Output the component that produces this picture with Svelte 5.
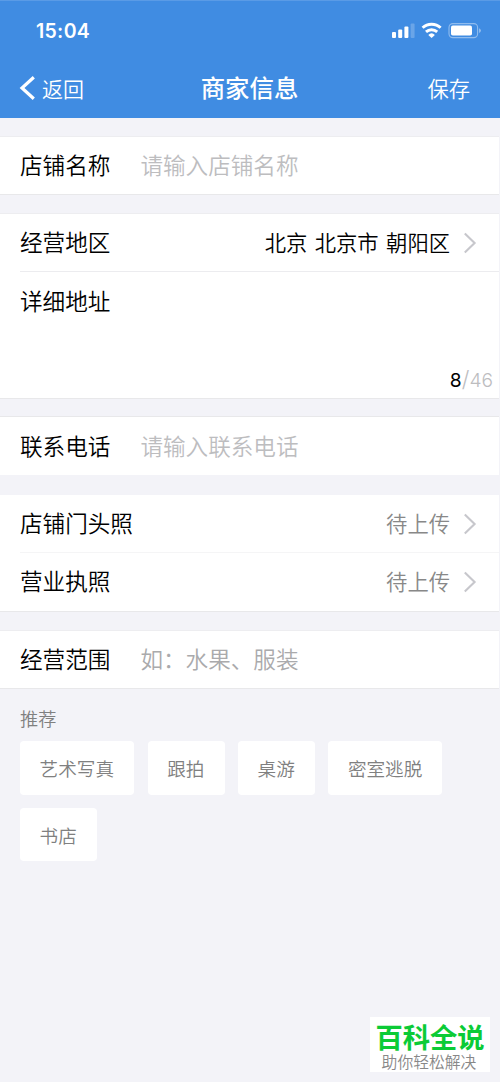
<script>
  const tags = ['艺术写真', '跟拍', '桌游', '密室逃脱', '书店'];
</script>

{#snippet chevron()}
  <svg class="chevron" viewBox="0 0 14 22" width="14" height="22"><path d="M1.8 1.6 11.6 11 1.8 20.4" fill="none" stroke="#c7c7cc" stroke-width="2.1" /></svg>
{/snippet}

<div class="screen">
  <header>
    <div class="status">
      <span class="time">15:04</span>
      <svg class="indicators" width="92" height="18" viewBox="0 0 92 18" fill="#fff">
        <rect x="2" y="10" width="4" height="6" rx="1" />
        <rect x="8.2" y="7.5" width="4" height="8.5" rx="1" />
        <rect x="14.4" y="4.5" width="4" height="11.5" rx="1" />
        <rect x="20.6" y="1.5" width="4" height="14.5" rx="1" opacity=".22" />
        <g fill="none" stroke="#fff" stroke-width="2.9">
          <path d="M32.6 5.8a13 13 0 0 1 18 0" />
          <path d="M36 9.9a8.2 8.2 0 0 1 11.2 0" />
        </g>
        <path d="M38.3 12.9a4.8 4.8 0 0 1 6.6 0L41.6 16z" />
        <rect x="59" y="1.6" width="28.6" height="14" rx="3.8" fill="none" stroke="#fff" stroke-width="1.1" opacity=".42" />
        <rect x="61" y="3.6" width="21" height="10" rx="1.8" />
        <path d="M89.2 6.2a2.6 2.6 0 0 1 0 4.8z" opacity=".5" />
      </svg>
    </div>
    <nav>
      <div class="back">
        <svg width="16" height="24" viewBox="0 0 16 24"><path d="M14.8 1.2 3 12l11.8 10.8" fill="none" stroke="#fff" stroke-width="3.2" /></svg>
        <span>返回</span>
      </div>
      <h1>商家信息</h1>
      <span class="save">保存</span>
    </nav>
  </header>

  <section class="first">
    <div class="row"><span class="label">店铺名称</span><span class="hint">请输入店铺名称</span></div>
  </section>

  <section class="region">
    <div class="row"><span class="label">经营地区</span><span class="value">北京 北京市 朝阳区</span>{@render chevron()}</div>
    <div class="address">
      <span class="label">详细地址</span>
      <span class="count"><b>8</b><i>/</i>46</span>
    </div>
  </section>

  <section class="phone">
    <div class="row"><span class="label">联系电话</span><span class="hint">请输入联系电话</span></div>
  </section>

  <section class="photos">
    <div class="row"><span class="label">店铺门头照</span><span class="value muted">待上传</span>{@render chevron()}</div>
    <div class="row second"><span class="label">营业执照</span><span class="value muted">待上传</span>{@render chevron()}</div>
  </section>

  <section class="scope">
    <div class="row"><span class="label">经营范围</span><span class="hint darker">如：水果、服装</span></div>
  </section>

  <div class="suggest">
    <h2>推荐</h2>
    <div class="tags">
      {#each tags as tag}<span class="tag">{tag}</span>{/each}
    </div>
  </div>

  <div class="mark">
    <strong>百科全说</strong>
    <span>助你轻松解决</span>
  </div>
</div>

<style>
  :global(body) { margin: 0; background: #f3f3f8; }
  .screen {
    box-sizing: border-box;
    position: relative;
    width: 500px;
    height: 1082px;
    overflow: hidden;
    background: #f3f3f8;
    font-family: 'Noto Sans CJK SC', sans-serif;
    color: #000;
    font-weight: 350;
  }
  header { height: 118px; background: #408ce2; color: #fff; box-shadow: inset 0 1px #5a9be6; }
  .status { display: flex; justify-content: space-between; height: 60px; padding: 0 18px 0 36px; align-items: center; box-sizing: border-box; }
  .time { font: 600 19.5px/24px Inter, sans-serif; letter-spacing: .3px; padding-top: 1px; }
  .indicators { margin-top: 2px; }
  nav { display: grid; grid-template-columns: 1fr auto 1fr; align-items: center; height: 56px; padding: 0 30px 0 19px; }
  .back { display: flex; align-items: center; gap: 7px; font-size: 21px; line-height: 30px; }
  .back span, .save { margin-top: -1px; }
  h1 { margin: -2px 0 0 10px; font-size: 24.4px; line-height: 34px; font-weight: 500; }
  .save { justify-self: end; font-size: 21.3px; line-height: 30px; }
  section { box-sizing: border-box; width: 499px; background: #fff; box-shadow: 0 -1px #ededf0, 0 1px #e8e8ea; }
  .first { margin-top: 19px; height: 57px; }
  .region { margin-top: 20px; height: 184px; }
  .phone { margin-top: 19px; height: 58px; box-shadow: 0 -1px #e8e8ea; }
  .photos { margin-top: 20px; height: 116px; box-shadow: 0 1px #e8e8ea; }
  .scope { margin-top: 20px; height: 57px; }
  .row { display: flex; align-items: center; height: 57px; padding: 0 22px 0 20px; }
  .row .label, .hint, .value { margin-top: -1px; }
  .label { font-size: 22.6px; line-height: 32px; white-space: nowrap; }
  .hint { font-size: 22.6px; line-height: 32px; color: #bdbdbf; margin-left: 30px; }
  .darker { color: #aaaaac; }
  .value { margin-left: auto; margin-right: 13px; font-size: 21.3px; line-height: 30px; white-space: pre; word-spacing: 2.7px; }
  .muted { color: #888; }
  .phone .label, .phone .hint { margin-top: 0; }
  .address { display: flex; flex-direction: column; justify-content: space-between; height: 126px; margin-left: 20px; box-sizing: border-box; border-top: 1px solid #ececef; padding: 13px 6px 2px 0; }
  .count { align-self: flex-end; font: 300 19.2px/30px Inter, sans-serif; color: #bdbdbf; }
  .count b { font-weight: 400; color: #000; }
  .count i { font-style: normal; font-size: 22px; line-height: 20px; }
  .second { margin-left: 20px; padding-left: 0; height: 58px; border-top: 1px solid #f5f5f6; }
  .second .label, .second .value { margin-top: -2px; }
  .suggest { padding: 17px 20px 0; color: #808080; }
  h2 { margin: 0 0 9px; font-size: 18.2px; line-height: 27px; font-weight: 350; }
  .tags { display: flex; flex-wrap: wrap; gap: 13px 13.4px; }
  .tag { box-sizing: border-box; height: 53.5px; padding: 0 20.2px 0 19.6px; border-radius: 4px; background: #fff; font-size: 18.6px; line-height: 53px; }
  .mark { position: absolute; left: 370px; top: 1017px; width: 120px; height: 55px; background: #fff; display: flex; flex-direction: column; align-items: center; white-space: nowrap; }
  .mark strong { color: #0bcb36; font-size: 27.3px; line-height: 34px; font-weight: 700; margin-top: 2px; }
  .mark span { color: #888; font-size: 15.8px; line-height: 18px; margin: 0 2px 0 0; }
</style>
